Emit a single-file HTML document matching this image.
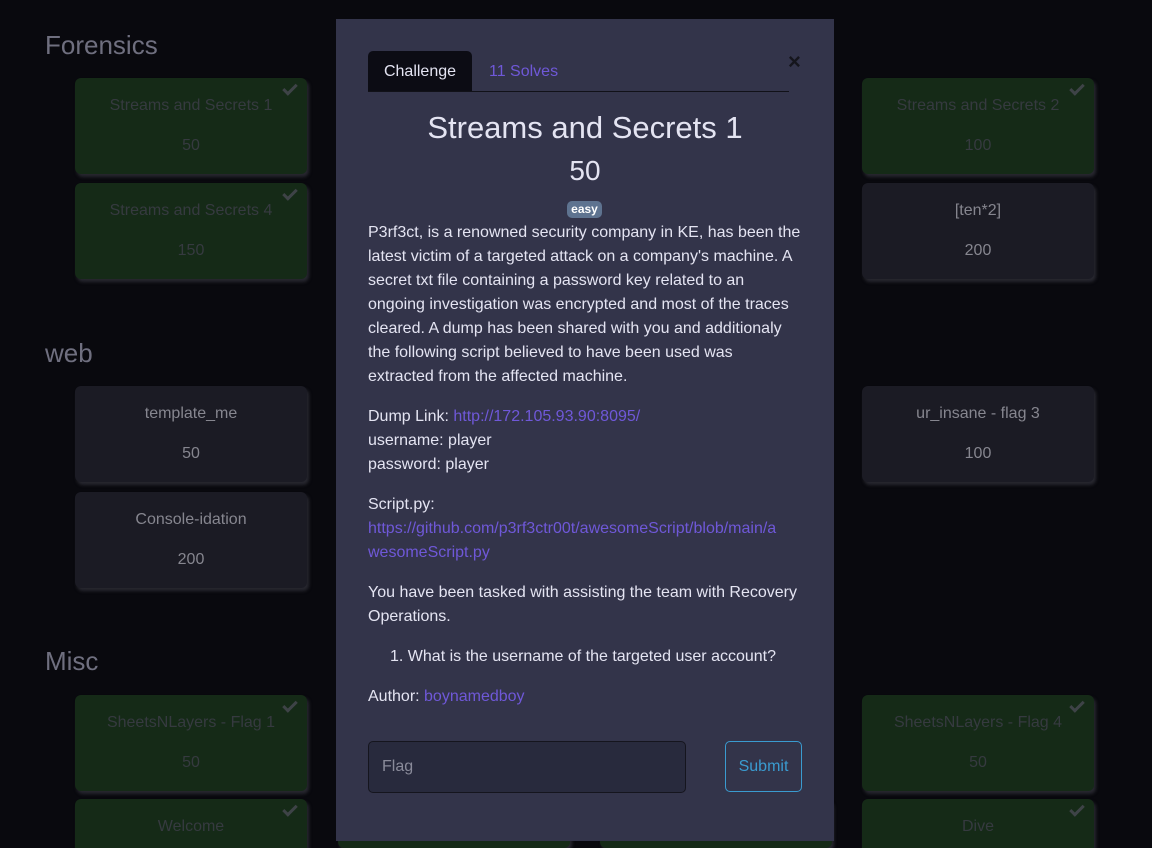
<!DOCTYPE html>
<html style="width:1152px;height:848px;overflow:hidden"><head><style>
*{box-sizing:border-box;margin:0;padding:0}
body{width:1152px;height:848px;background:#09090e;font-family:"Liberation Sans",sans-serif;position:relative;overflow:hidden}
.h{position:absolute;left:45px;font-size:26px;color:#6f6f7f}
.c{position:absolute;width:232px;height:96px;border-radius:6px;text-align:center;font-size:16px;box-shadow:2px 3px 3px rgba(60,60,70,.6)}
.g{background:#152a17;color:#363a40}
.d{background:#1b1b24;color:#86868f}
.c .t{position:absolute;top:19px;left:0;right:0}
.c .p{position:absolute;top:59px;left:0;right:0}
.ck{position:absolute;right:10px;top:6px;width:14px;height:8px;border-left:3px solid #3e4347;border-bottom:3px solid #3e4347;transform:rotate(-45deg)}
.m{position:absolute;left:336px;top:19px;width:498px;height:822px;background:#33344a;color:#e4e4f2;font-size:16px}
a{color:#6f58d8;text-decoration:none}
.bd{position:absolute;left:32px;width:440px;line-height:24px;white-space:nowrap}
</style></head><body>
<div class="h" style="top:30px">Forensics</div>
<div class="h" style="top:338px">web</div>
<div class="h" style="top:646px">Misc</div>

<div class="c g" style="left:75px;top:78px"><div class="ck"></div><div class="t">Streams and Secrets 1</div><div class="p">50</div></div>
<div class="c g" style="left:75px;top:183px"><div class="ck"></div><div class="t">Streams and Secrets 4</div><div class="p">150</div></div>
<div class="c g" style="left:862px;top:78px"><div class="ck"></div><div class="t">Streams and Secrets 2</div><div class="p">100</div></div>
<div class="c d" style="left:862px;top:183px"><div class="t">[ten*2]</div><div class="p">200</div></div>
<div class="c d" style="left:75px;top:386px"><div class="t">template_me</div><div class="p">50</div></div>
<div class="c d" style="left:75px;top:492px"><div class="t">Console-idation</div><div class="p">200</div></div>
<div class="c d" style="left:862px;top:386px"><div class="t">ur_insane - flag 3</div><div class="p">100</div></div>
<div class="c g" style="left:75px;top:695px"><div class="ck"></div><div class="t">SheetsNLayers - Flag 1</div><div class="p">50</div></div>
<div class="c g" style="left:75px;top:799px;height:49px;border-radius:6px 6px 0 0"><div class="ck"></div><div class="t">Welcome</div></div>
<div class="c g" style="left:862px;top:695px"><div class="ck"></div><div class="t">SheetsNLayers - Flag 4</div><div class="p">50</div></div>
<div class="c g" style="left:862px;top:799px;height:49px;border-radius:6px 6px 0 0"><div class="ck"></div><div class="t">Dive</div></div>
<div class="c g" style="left:338px;top:799px;height:49px"></div>
<div class="c g" style="left:600px;top:799px;height:49px"></div>

<div class="m">
 <div style="position:absolute;left:32px;top:32px;width:104px;height:41px;background:#0c0c14;border-radius:5px 5px 0 0;text-align:center;line-height:41px">Challenge</div>
 <div style="position:absolute;left:153px;top:32px;line-height:41px;color:#6f58d8">11 Solves</div>
 <div style="position:absolute;left:32px;top:72px;width:421px;height:1px;background:#111118"></div>
 <div style="position:absolute;left:452px;top:30px;font-size:22px;font-weight:bold;color:#15151c">×</div>
 <div style="position:absolute;left:0;right:0;top:91px;text-align:center;font-size:31px">Streams and Secrets 1</div>
 <div style="position:absolute;left:0;right:0;top:136px;text-align:center;font-size:28px">50</div>
 <div style="position:absolute;left:231px;top:182px;width:35px;height:17px;background:#5e7390;border-radius:5px;font-size:12px;font-weight:bold;text-align:center;line-height:17px;color:#fff">easy</div>
 <div class="bd" style="top:202px">P3rf3ct, is a renowned security company in KE, has been the<br>latest victim of a targeted attack on a company's machine. A<br>secret txt file containing a password key related to an<br>ongoing investigation was encrypted and most of the traces<br>cleared. A dump has been shared with you and additionaly<br>the following script believed to have been used was<br>extracted from the affected machine.</div>
 <div class="bd" style="top:386px">Dump Link: <a>http://172.105.93.90:8095/</a><br>username: player<br>password: player</div>
 <div class="bd" style="top:474px">Script.py:<br><a>https://github.com/p3rf3ctr00t/awesomeScript/blob/main/a<br>wesomeScript.py</a></div>
 <div class="bd" style="top:562px">You have been tasked with assisting the team with Recovery<br>Operations.</div>
 <div class="bd" style="top:626px;left:54px">1. What is the username of the targeted user account?</div>
 <div class="bd" style="top:666px">Author: <a>boynamedboy</a></div>
 <div style="position:absolute;left:32px;top:722px;width:318px;height:52px;background:#282a3d;border:1px solid #15151e;border-radius:5px;padding-left:13px;line-height:50px;color:#8a8b9a">Flag</div>
 <div style="position:absolute;left:389px;top:722px;width:77px;height:51px;border:1px solid #3a9bd0;border-radius:5px;text-align:center;line-height:49px;color:#3a9bd0">Submit</div>
</div>
</body></html>
